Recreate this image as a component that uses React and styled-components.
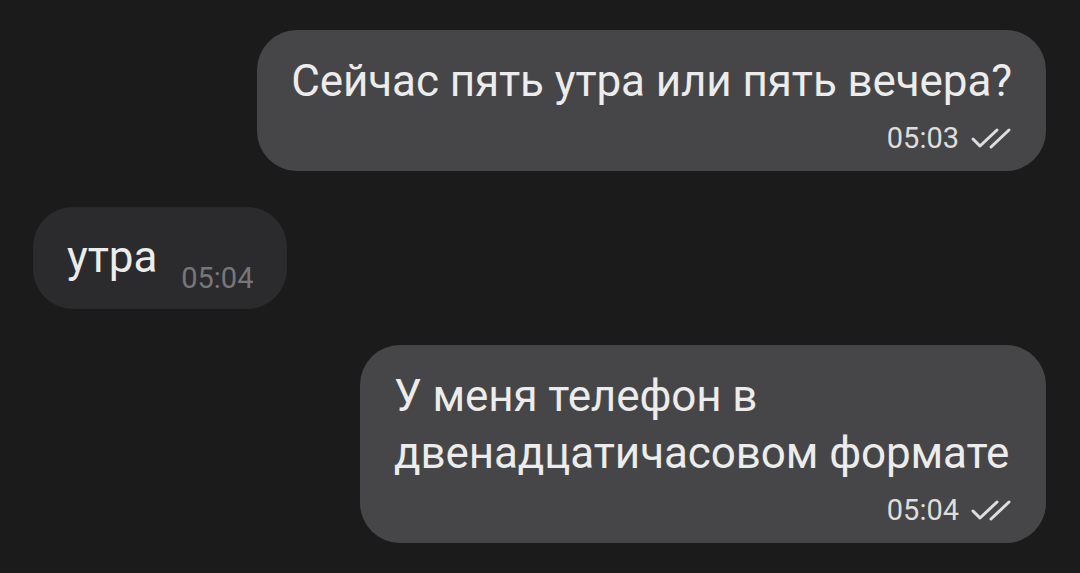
import React from "react";
import styled, { createGlobalStyle } from "styled-components";

const Global = createGlobalStyle`
  html, body {
    margin: 0;
    padding: 0;
    background: #1b1b1c;
  }
  body {
    font-family: Roboto, "Noto Sans", sans-serif;
    -webkit-font-smoothing: antialiased;
  }
`;

const Chat = styled.div`
  display: flex;
  flex-direction: column;
  gap: 36px;
  padding: 30px 34px 0 33px;
  width: 1080px;
  height: 573px;
  box-sizing: border-box;
  background: #1b1b1c;
  overflow: hidden;
`;

const Bubble = styled.div`
  align-self: ${(props) => (props.out ? "flex-end" : "flex-start")};
  background: ${(props) => (props.out ? "#464648" : "#2b2b2d")};
  border-radius: 40px;
  box-sizing: border-box;
  color: #ececec;
  max-width: ${(props) => props.maxw || "none"};
  padding: ${(props) => (props.out ? "23px 34px 15px 34px" : "22px 34px 23px 34px")};
  display: flex;
  flex-direction: ${(props) => (props.out ? "column" : "row")};
  align-items: ${(props) => (props.out ? "stretch" : "flex-end")};
`;

const Text = styled.div`
  font-size: 44px;
  line-height: 57px;
  letter-spacing: -0.1px;
`;

const Meta = styled.div`
  display: flex;
  align-items: center;
  justify-content: flex-end;
  gap: 11px;
  margin-top: ${(props) => (props.out ? "10px" : "0")};
  margin-left: ${(props) => (props.out ? "0" : "24px")};
  margin-bottom: ${(props) => (props.out ? "0" : "-10px")};
`;

const Time = styled.span`
  font-size: 29px;
  line-height: 36px;
  color: ${(props) => (props.out ? "#dedede" : "#77777a")};
`;

const Checks = () => (
  <svg width="42" height="24" viewBox="0 0 42 24" fill="none">
    <path
      d="M3 13 L10 20 L27 4 M21 21 L39 4"
      stroke="#dedede"
      strokeWidth="3"
      strokeLinecap="round"
      strokeLinejoin="round"
    />
  </svg>
);

const messages = [
  { out: true, text: "Сейчас пять утра или пять вечера?", time: "05:03" },
  { out: false, text: "утра", time: "05:04" },
  {
    out: true,
    text: "У меня телефон в двенадцатичасовом формате",
    time: "05:04",
    maxw: "686px",
  },
];

export default function App() {
  return (
    <>
      <Global />
      <Chat>
        {messages.map((m, i) => (
          <Bubble key={i} out={m.out ? 1 : 0} maxw={m.maxw}>
            <Text>{m.text}</Text>
            <Meta out={m.out ? 1 : 0}>
              <Time out={m.out ? 1 : 0}>{m.time}</Time>
              {m.out && <Checks />}
            </Meta>
          </Bubble>
        ))}
      </Chat>
    </>
  );
}
